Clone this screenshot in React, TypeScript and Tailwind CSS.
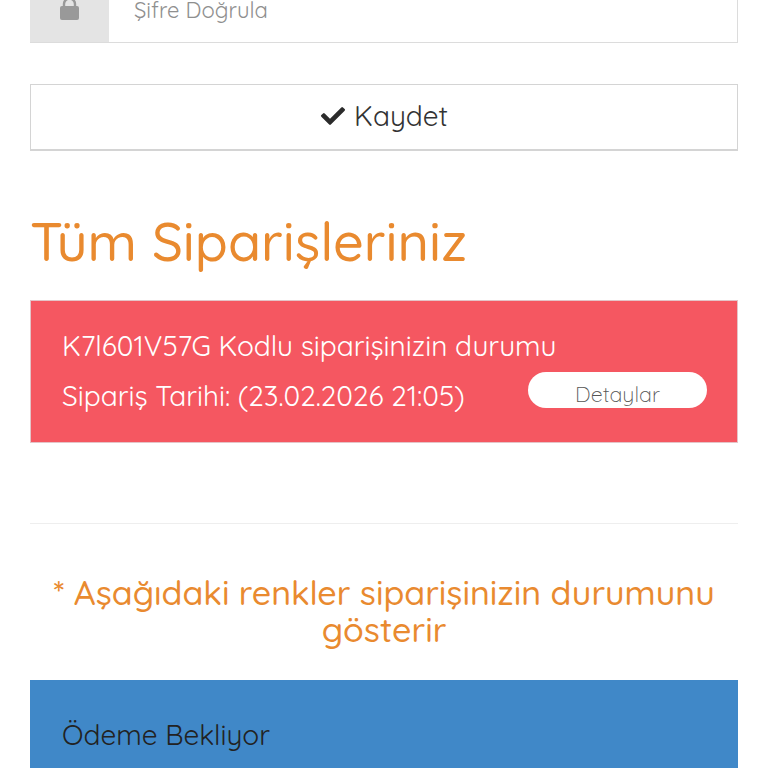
export default function App() {
  return (
    <div className="relative h-[768px] w-[768px] overflow-hidden bg-white px-[30px] font-['Quicksand','Lato','Noto_Sans',sans-serif]">
      <div className="flex h-[43px] border-r border-b border-[#dcdcdc]">
        <div className="flex w-[79px] items-start justify-center bg-[#e4e4e4]">
          <svg viewBox="0 0 19 24" className="-mt-[4px] h-[24px] w-[19px]">
            <path d="M4 11V8a5.5 5.5 0 0 1 11 0v3" fill="none" stroke="#999" strokeWidth="2.4" />
            <rect x="0" y="10" width="19" height="14" rx="2" fill="#999" />
          </svg>
        </div>
        <div className="flex-1 pl-[25px] text-[22px] leading-[21px] text-[#8f8f8f]">Şifre Doğrula</div>
      </div>
      <button className="mt-[41px] flex h-[67px] w-full items-center justify-center gap-[8px] border border-b-2 border-[#d4d4d4] pb-[2px] text-[28px] text-[#333]">
        <svg viewBox="0 0 512 512" className="h-[24px] w-[26px] fill-[#2b2b2b]"><path d="M174 439 7 273a25 25 0 0 1 0-36l36-36a25 25 0 0 1 36 0l113 112L433 73a25 25 0 0 1 36 0l36 36a25 25 0 0 1 0 36L210 439a25 25 0 0 1-36 0z"/></svg>
        Kaydet
      </button>
      <h1 className="mt-[56px] text-[54px] leading-[68px] font-medium text-[#e98a2f]">Tüm Siparişleriniz</h1>
      <div className="mt-[25px] flex h-[143px] flex-col border border-[#e4c4c8] bg-[#f55761] pl-[31px] text-[28px] text-white">
        <div className="mt-[26px] leading-[38px] whitespace-nowrap">K7l601V57G Kodlu siparişinizin durumu</div>
        <div className="mt-[12px] flex items-center justify-between pr-[30px]">
          <span className="leading-[38px] whitespace-nowrap">Sipariş Tarihi: (23.02.2026 21:05)</span>
          <span className="-mt-[12px] flex h-[36px] w-[179px] items-center justify-center rounded-full bg-white pt-[8px] text-[21.5px] font-light text-[#555]">Detaylar</span>
        </div>
      </div>
      <div className="mt-[80px] border-t border-[#eeeeee]" />
      <p className="mt-[50px] text-center text-[34px] leading-[37px] font-medium text-[#e98a2f]">* Aşağıdaki renkler siparişinizin durumunu gösterir</p>
      <div className="mt-[32px] h-[100px] bg-[#4088c8] pl-[32px] pt-[35px] text-[28px] leading-[40px] text-[#222]">Ödeme Bekliyor</div>
    </div>
  );
}
